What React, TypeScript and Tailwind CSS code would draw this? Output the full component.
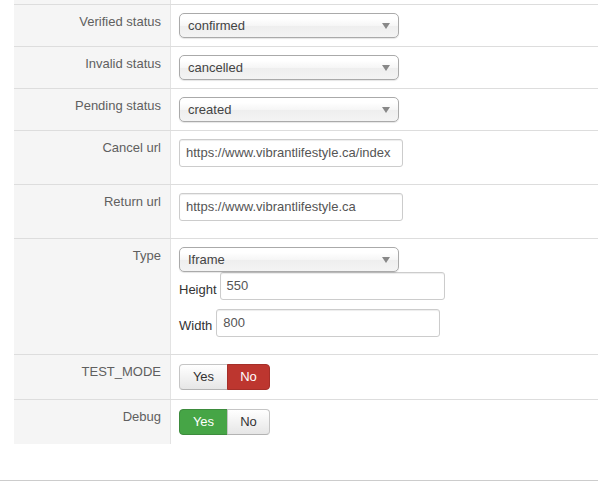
import type { ReactNode } from "react";

const font = { fontFamily: '"Liberation Sans", Arial, sans-serif' };

function Row({
  label,
  height,
  children,
}: {
  label: string;
  height: string;
  children: ReactNode;
}) {
  return (
    <div className={`flex border-t border-[#ddd] ${height}`}>
      <div className="w-[157px] shrink-0 bg-[#f5f5f5] border-r border-[#e3e3e3] pr-[9px] pt-[8px] text-right text-[13px] leading-[18px] text-[#5f5f5f]">
        {label}
      </div>
      <div className="flex-1 pl-[8px] pt-[8px]">{children}</div>
    </div>
  );
}

function Select({ value }: { value: string }) {
  return (
    <div className="relative flex h-[25px] w-[220px] items-center rounded-[5px] border border-[#aaa] bg-[linear-gradient(#fff_20%,#f6f6f6_50%,#eee_52%,#f4f4f4_100%)] pl-[8px] text-[13px] text-[#444] shadow-[0_1px_1px_rgba(0,0,0,0.1)]">
      {value}
      <svg
        className="absolute right-[8px] top-[9px]"
        width="8"
        height="6"
        viewBox="0 0 8 6"
      >
        <path d="M0 0h8L4 6z" fill="#888" />
      </svg>
    </div>
  );
}

function TextInput({ value, width }: { value: string; width: string }) {
  return (
    <div
      className={`flex h-[28px] items-center rounded-[3px] border border-[#ccc] bg-white px-[6px] text-[13px] text-[#555] shadow-[inset_0_1px_1px_rgba(0,0,0,0.075)] ${width}`}
    >
      {value}
    </div>
  );
}

function Toggle({ on }: { on: "yes" | "no" }) {
  const idle =
    "border-[#c5c5c5] border-b-[#b3b3b3] bg-[linear-gradient(#fff,#e6e6e6)] text-[#333]";
  return (
    <div className="mt-[1px] flex h-[26px] text-[13px]">
      <div
        className={`flex w-[49px] items-center justify-center rounded-l-[4px] border ${
          on === "yes"
            ? "border-[#3d8b3d] bg-[#46a546] text-white"
            : idle
        }`}
      >
        Yes
      </div>
      <div
        className={`-ml-px flex w-[43px] items-center justify-center rounded-r-[4px] border ${
          on === "no"
            ? "border-[#a52f29] bg-[#bd362f] text-white"
            : idle
        }`}
      >
        No
      </div>
    </div>
  );
}

export default function App() {
  return (
    <div className="h-[485px] w-[598px] overflow-hidden bg-white" style={font}>
      <div className="ml-[14px]">
        <div className="flex h-[4px]">
          <div className="w-[157px] bg-[#f5f5f5] border-r border-[#e3e3e3]" />
        </div>
        <Row label="Verified status" height="h-[42px]">
          <Select value="confirmed" />
        </Row>
        <Row label="Invalid status" height="h-[42px]">
          <Select value="cancelled" />
        </Row>
        <Row label="Pending status" height="h-[42px]">
          <Select value="created" />
        </Row>
        <Row label="Cancel url" height="h-[54px]">
          <TextInput
            value="https://www.vibrantlifestyle.ca/index"
            width="w-[224px]"
          />
        </Row>
        <Row label="Return url" height="h-[54px]">
          <TextInput
            value="https://www.vibrantlifestyle.ca"
            width="w-[224px]"
          />
        </Row>
        <Row label="Type" height="h-[116px]">
          <Select value="Iframe" />
          <div className="flex gap-[3px] text-[13px] text-[#333]">
            <span className="pt-[9px] leading-[18px]">Height</span>
            <TextInput value="550" width="w-[225px]" />
          </div>
          <div className="mt-[9px] flex gap-[4px] text-[13px] text-[#333]">
            <span className="pt-[8px] leading-[18px]">Width</span>
            <TextInput value="800" width="w-[224px]" />
          </div>
        </Row>
        <Row label="TEST_MODE" height="h-[45px]">
          <Toggle on="no" />
        </Row>
        <Row label="Debug" height="h-[45px]">
          <Toggle on="yes" />
        </Row>
      </div>
      <div className="mt-[36px] border-t border-[#ccc]" />
    </div>
  );
}
